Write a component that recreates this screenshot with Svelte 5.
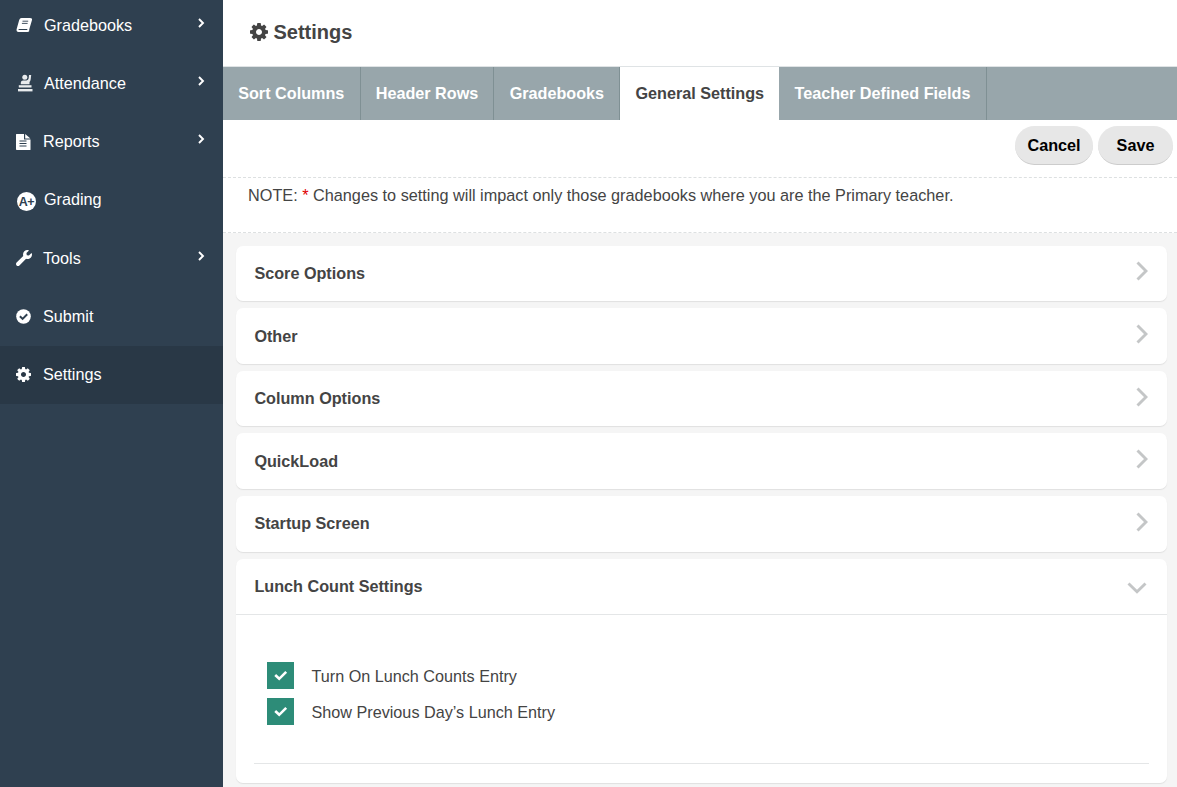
<script>
const menu = [
	{ label: 'Gradebooks', icon: 'book', expandable: true },
	{ label: 'Attendance', icon: 'attendance', expandable: true },
	{ label: 'Reports', icon: 'report', expandable: true },
	{ label: 'Grading', icon: 'grade' },
	{ label: 'Tools', icon: 'wrench', expandable: true },
	{ label: 'Submit', icon: 'check' },
	{ label: 'Settings', icon: 'cog' },
];
const tabs = ['Sort Columns', 'Header Rows', 'Gradebooks', 'General Settings', 'Teacher Defined Fields'];
const sections = ['Score Options', 'Other', 'Column Options', 'QuickLoad', 'Startup Screen', 'Lunch Count Settings'];

let activeTab = $state('General Settings');
let openSection = $state('Lunch Count Settings');
let options = $state([
	{ label: 'Turn On Lunch Counts Entry', checked: true },
	{ label: 'Show Previous Day’s Lunch Entry', checked: true },
]);

function toggleSection(name) {
	openSection = openSection === name ? '' : name;
}
</script>

{#snippet cog()}
	<svg class="cog" viewBox="128 128 1536 1536" fill="currentColor">
		<path d="M1152 896q0-106-75-181t-181-75-181 75-75 181 75 181 181 75 181-75 75-181zm512-109v222q0 12-8 23t-20 13l-185 28q-19 54-39 91 35 50 107 138 10 12 10 25t-9 23q-27 37-99 108t-94 71q-12 0-26-9l-138-108q-44 23-91 38-16 136-29 186-7 28-36 28h-222q-14 0-24.5-8.5t-11.5-21.5l-28-184q-49-16-90-37l-141 107q-10 9-25 9-14 0-25-11-126-114-165-168-7-10-7-23 0-12 8-23 15-21 51-66.5t54-70.5q-27-50-41-99l-183-27q-13-2-21-12.5t-8-23.5v-222q0-12 8-23t19-13l186-28q14-46 39-92-40-57-107-138-10-12-10-24 0-10 9-23 26-36 98.5-107.5t94.5-71.5q13 0 26 10l138 107q44-23 91-38 16-136 29-186 7-28 36-28h222q14 0 24.5 8.5t11.5 21.5l28 184q49 16 90 37l142-107q9-9 24-9 13 0 25 10 129 119 165 170 7 8 7 22 0 12-8 23-15 21-51 66.5t-54 70.5q26 50 41 98l183 28q13 2 21 12.5t8 23.5z" />
	</svg>
{/snippet}

<div class="layout">
	<nav class="sidebar">
		{#each menu as item}
			<a class="menu-item {item.icon}" class:active={item.label === 'Settings'} href="#{item.icon}">
				<span class="menu-icon">
					{#if item.icon === 'book'}
						<svg width="18" height="16" viewBox="0 0 18 16" fill="none">
							<path d="M6.500 1H15Q17.500 1 17 3L14.500 11.500Q14 13 14.200 14.200Q13.600 15 12.500 15H3.500Q1.200 15 1.600 12.300L4.200 3Q4.800 1 6.500 1Z" fill="currentColor" />
							<path d="M7.500 4.200H13.200M6.900 6.400H12.600" stroke="#2f4050" stroke-width="0.900" />
							<path d="M3.600 12.500H12.300" stroke="#2f4050" stroke-width="1" />
						</svg>
					{:else if item.icon === 'attendance'}
						<svg width="17" height="18" viewBox="0 0 17 18" fill="#e8ebed">
							<circle cx="7.800" cy="3.200" r="2.500" />
							<path d="M3.800 10.200V8.500Q4 6.600 6 6.600H9.500Q11.400 6.200 11.700 4.200L12 1H14.200L13.700 5.200Q13.400 7.200 12.500 8V10.200Z" />
							<rect x="1.800" y="11.200" width="12.700" height="2.300" />
							<rect x="1" y="15" width="14.500" height="2.400" />
						</svg>
					{:else if item.icon === 'report'}
						<svg width="16" height="18" viewBox="0 0 16 18">
							<path d="M1.500 1H9V6.500H15.500V16.500Q15.500 17 15 17H1.800Q1 17 1 16.200V1.500Q1 1 1.500 1Z" fill="currentColor" />
							<path d="M10.200 1L15.400 5.500H10.200Z" fill="currentColor" />
							<path d="M4.500 8H11.500M4.500 10.500H11.500M4.500 13H11.500" stroke="#2f4050" stroke-width="1" />
						</svg>
					{:else if item.icon === 'grade'}
						<span class="grade-badge">A+</span>
					{:else if item.icon === 'wrench'}
						<svg width="16" height="16" viewBox="0 0 512 512" fill="currentColor">
							<path d="M507.73 109.1c-2.24-9.03-13.54-12.09-20.12-5.51l-74.36 74.36-67.88-11.31-11.31-67.88 74.36-74.36c6.62-6.62 3.43-17.9-5.66-20.16-47.38-11.74-99.55.91-136.58 37.93-39.64 39.64-50.55 97.1-34.05 147.2L18.74 402.76c-24.99 24.99-24.99 65.51 0 90.5 24.99 24.99 65.51 24.99 90.5 0l213.21-213.21c50.12 16.71 107.47 5.68 147.37-34.22 37.07-37.07 49.7-89.32 37.91-136.73z" />
						</svg>
					{:else if item.icon === 'check'}
						<svg width="15" height="15" viewBox="0 0 15 15" fill="none">
							<circle cx="7.500" cy="7.500" r="7.300" fill="currentColor" />
							<path d="M3.900 7.300L6.600 9.900L11.200 5.300" stroke="#2f4050" stroke-width="2" />
						</svg>
					{:else}
						{@render cog()}
					{/if}
				</span>
				<span class="menu-label">{item.label}</span>
				{#if item.expandable}
					<svg class="menu-arrow" width="8" height="10" viewBox="0 0 8 10" fill="none">
						<path d="M2 1L6 5L2 9" stroke="currentColor" stroke-width="1.900" />
					</svg>
				{/if}
			</a>
		{/each}
	</nav>

	<main class="content">
		<header class="title">
			{@render cog()}
			<h1>Settings</h1>
		</header>

		<div class="tabs">
			{#each tabs as tab}
				<button class="tab" class:selected={tab === activeTab} onclick={() => (activeTab = tab)}>{tab}</button>
			{/each}
		</div>

		<div class="toolbar">
			<button class="pill cancel">Cancel</button>
			<button class="pill save">Save</button>
		</div>

		<p class="note">NOTE: <span class="star">*</span> Changes to setting will impact only those gradebooks where you are the Primary teacher.</p>

		<div class="sections">
			{#each sections as section}
				<section class="card" class:open={section === openSection}>
					<button class="card-head" onclick={() => toggleSection(section)}>
						<span>{section}</span>
						{#if section === openSection}
							<svg class="down" width="20" height="12" viewBox="0 0 20 12" fill="none">
								<path d="M1.500 1.500L10 9.800L18.500 1.500" stroke="#c4c6c7" stroke-width="2.900" />
							</svg>
						{:else}
							<svg class="right" width="12" height="20" viewBox="0 0 12 20" fill="none">
								<path d="M1.500 1.500L10 10L1.500 18.500" stroke="#c4c6c7" stroke-width="2.900" />
							</svg>
						{/if}
					</button>
					{#if section === openSection}
						<div class="card-body">
							{#each options as option}
								<label class="option">
									<input type="checkbox" bind:checked={option.checked} />
									<span class="box">
										{#if option.checked}
											<svg width="14" height="11" viewBox="0 0 14 11" fill="none">
												<path d="M1.200 5L5.200 8.800L12.200 1.800" stroke="#fff" stroke-width="2.600" />
											</svg>
										{/if}
									</span>
									<span class="option-label">{option.label}</span>
								</label>
							{/each}
							<hr />
						</div>
					{/if}
				</section>
			{/each}
		</div>
	</main>
</div>

<style>
:global(body) {
	margin: 0;
	overflow: hidden;
}
.layout {
	display: flex;
	width: 100%;
	height: 100vh;
	overflow: hidden;
	font-family: "Liberation Sans", Arial, sans-serif;
	font-size: 16.200px;
	color: #444;
	background: #f5f5f5;
}
button {
	font: inherit;
	color: inherit;
	border: 0;
	background: none;
	cursor: pointer;
}

/* sidebar */
.sidebar {
	flex: none;
	width: 223px;
	box-sizing: border-box;
	background: #2f4050;
}
.menu-item {
	display: flex;
	align-items: center;
	box-sizing: border-box;
	height: 58.250px;
	padding: 0 18px 0 15px;
	color: #fff;
	text-decoration: none;
}
.menu-item:first-child {
	margin-top: -3.900px;
}
.menu-item.active {
	background: #293846;
}
.menu-icon {
	display: flex;
	flex: none;
	width: 28px;
}
.menu-icon .cog {
	width: 15px;
	height: 15px;
	margin-left: 1px;
}
.book .menu-label,
.attendance .menu-label,
.grade .menu-label {
	padding-left: 1px;
}
.attendance .menu-icon {
	padding-left: 2px;
	width: 26px;
}
.wrench .menu-icon,
.check .menu-icon {
	padding-left: 1px;
	width: 27px;
}
.menu-arrow {
	margin: 0 0 5px auto;
}
.grade-badge {
	width: 19px;
	height: 19px;
	margin: 4px 0 0 2px;
	border-radius: 50%;
	background: #fff;
	color: #2f4050;
	font-size: 12.500px;
	font-weight: bold;
	line-height: 20px;
	text-align: center;
	letter-spacing: -0.300px;
}

/* page head */
.content {
	flex: 1;
	min-width: 0;
	display: flex;
	flex-direction: column;
}
.title {
	display: flex;
	align-items: center;
	flex: none;
	height: 64px;
	padding: 0 0 2px 27px;
	gap: 6px;
	background: #fff;
	border-bottom: 1px solid #dfe3e5;
}
.title .cog {
	width: 18px;
	height: 18px;
}
h1 {
	margin: 0 0 0 -0.500px;
	font-size: 20px;
}
.tabs {
	display: flex;
	flex: none;
	height: 53px;
	background: #98a6ab;
}
.tab {
	padding: 0 15.200px;
	border-right: 1px solid #7f9094;
	color: #fff;
	font-weight: bold;
}
.tab.selected {
	background: #fff;
	color: #444;
	border-right: 0;
}
.toolbar {
	display: flex;
	justify-content: flex-end;
	flex: none;
	gap: 5px;
	height: 57px;
	box-sizing: border-box;
	padding: 6px 4px 0 0;
	background: #fff;
}
.pill {
	height: 39px;
	padding: 0;
	border-radius: 20px;
	border-bottom: 1px solid #ccc;
	background: #e7e7e7;
	color: #000;
	font-weight: bold;
}
.cancel {
	width: 78px;
}
.save {
	width: 75px;
}
.note {
	flex: none;
	margin: 0;
	height: 54px;
	padding: 0 25px;
	font-size: 16.250px;
	line-height: 35px;
	border: dashed #dde0e1;
	border-width: 1px 0;
	background: #fff;
}
.star {
	color: #e00000;
}

/* accordion */
.sections {
	display: flex;
	flex-direction: column;
	gap: 7px;
	padding: 12.700px 10px 0 13px;
}
.card {
	background: #fff;
	border-radius: 7px;
	box-shadow: 0 1px 1px #e0e0e0;
}
.card-head {
	display: flex;
	justify-content: space-between;
	align-items: center;
	width: 100%;
	height: 55.600px;
	padding: 0 19px 0 18.400px;
	font-weight: bold;
}
.right {
	margin-bottom: 4px;
}
.down {
	margin: 4px 1px 0 0;
}
.card-body {
	border-top: 1px solid #e4e6e7;
	padding: 46.800px 18px 19px;
}
.option {
	display: flex;
	align-items: center;
	gap: 17.500px;
	margin: 0 0 9px 13px;
}
.option input {
	display: none;
}
.option-label {
	padding-top: 2px;
}
.box {
	display: flex;
	align-items: center;
	justify-content: center;
	width: 27px;
	height: 27px;
	background: #2d8c78;
}
hr {
	margin: 38px 0 0;
	border: 0;
	border-top: 1px solid #e4e6e7;
}
</style>
